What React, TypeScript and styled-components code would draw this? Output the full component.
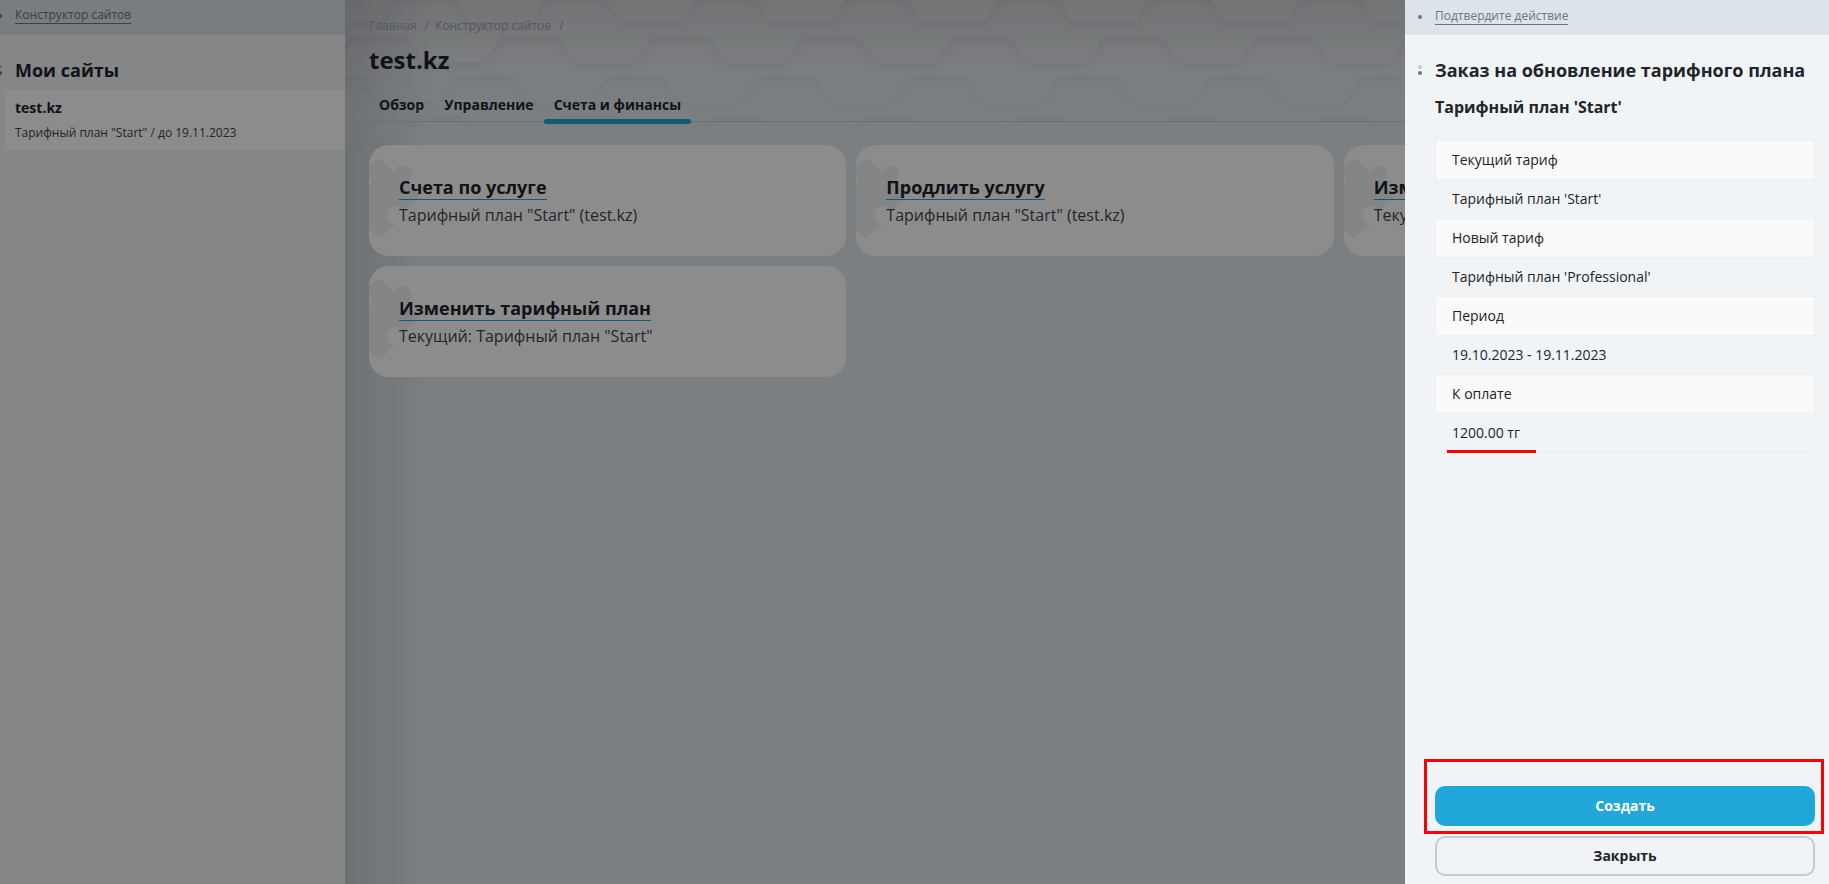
import React from "react";
import styled, { createGlobalStyle } from "styled-components";

const Global = createGlobalStyle`
  * { box-sizing: border-box; }
  html, body, #root { height: 100%; }
  body { margin: 0; overflow: hidden; font-family: "Open Sans", "Noto Sans", sans-serif; color: #20242b; }
  h1, h2, h3, p, ul, ol { margin: 0; padding: 0; }
  ul, ol { list-style: none; }
  a { color: inherit; text-decoration: none; }
`;

const Page = styled.div`
  display: grid;
  grid-template-columns: 345px minmax(0, 1fr);
  min-height: 100vh;
`;

const Sidebar = styled.aside`
  position: relative;
  background: #f0f4f7;
`;

const TopStrip = styled.div`
  display: flex;
  align-items: center;
  height: 35px;
  background: #dce3ea;
  font-size: 12px;
  line-height: 16px;
  color: #6c757d;
`;

const StripLink = styled.a`
  border-bottom: 1px solid #6c757d;
`;

const Dots = styled.span<{ $count: number }>`
  display: flex;
  flex: none;
  flex-direction: column;
  gap: 2px;
  width: 4px;
  &::before, &::after {
    content: "";
    width: 4px;
    height: 4px;
    border-radius: 50%;
    background: #6c757d;
  }
  &::before {
    display: ${(p) => (p.$count > 1 ? "block" : "none")};
    background: #c4c9ce;
  }
`;

const SideStrip = styled(TopStrip)`
  gap: 13px;
  margin-left: -2px;
  padding-bottom: 4px;
`;

const SideHeading = styled.div`
  display: flex;
  align-items: center;
  gap: 13px;
  margin: 22px 0 7px -2px;
`;

const Heading = styled.h2`
  font-size: 18px;
  line-height: 26px;
  font-weight: 700;
`;

const SiteItem = styled.a`
  display: block;
  margin-left: 5px;
  padding: 6px 10px;
  background: #fff;
`;

const SiteName = styled.strong`
  display: block;
  font-size: 14px;
  line-height: 24px;
  font-weight: 700;
`;

const SitePlan = styled.span`
  display: block;
  margin-top: 2px;
  font-size: 12px;
  line-height: 22px;
  color: #40464f;
`;

const Main = styled.main`
  position: relative;
  padding: 16px 8px 24px 24px;
  background: #e2e8ed;
`;

const Honeycomb = styled.svg`
  position: absolute;
  inset: 0 0 auto 0;
  width: 100%;
  height: 200px;
`;

const EdgeShade = styled.div`
  position: absolute;
  inset: 0 auto 0 0;
  width: 90px;
  background: linear-gradient(90deg, rgba(0, 8, 14, 0.11), rgba(0, 8, 14, 0));
`;

const Content = styled.div`
  position: relative;
`;

const Crumbs = styled.ol`
  display: flex;
  font-size: 12px;
  line-height: 20px;
  color: #9aa1a7;
  li::after { content: "/"; margin: 0 6px 0 8px; }
`;

const PageTitle = styled.h1`
  margin-top: 7px;
  font-size: 24px;
  line-height: 34px;
  font-weight: 700;
`;

const Tabs = styled.nav`
  display: flex;
  height: 45px;
  margin-bottom: 23px;
  border-bottom: 1px solid #bccdd6;
`;

const Tab = styled.a<{ $active?: boolean }>`
  position: relative;
  padding: 18px 10px 0;
  font-size: 14px;
  line-height: 20px;
  font-weight: 700;
  &::after {
    content: "";
    display: ${(p) => (p.$active ? "block" : "none")};
    position: absolute;
    inset: auto 0 -3px;
    height: 5px;
    border-radius: 3px;
    background: #22a7da;
  }
`;

const Cards = styled.div`
  display: grid;
  grid-template-columns: repeat(3, minmax(0, 1fr));
  gap: 10px;
`;

const Card = styled.article`
  position: relative;
  display: flex;
  flex-direction: column;
  align-items: flex-start;
  gap: 2px;
  min-height: 111px;
  padding: 30px 30px 28px;
  border-radius: 20px;
  background: #fff;
  overflow: hidden;
`;

const CardTitle = styled.a`
  position: relative;
  border-bottom: 1px solid #22a7da;
  font-size: 18px;
  line-height: 24px;
  font-weight: 700;
`;

const CardText = styled.p`
  position: relative;
  font-size: 16px;
  line-height: 26px;
  color: #40464f;
`;

const Puzzle = styled.svg`
  position: absolute;
  left: 0;
  top: 10px;
  width: 52px;
  height: 90px;
`;

const Backdrop = styled.div`
  position: fixed;
  inset: 0;
  background: rgba(0, 0, 0, 0.45);
`;

const Drawer = styled.section`
  position: fixed;
  inset: 0 0 0 auto;
  display: flex;
  flex-direction: column;
  width: 424px;
  background: #f0f4f7;
`;

const DrawerStrip = styled(TopStrip)`
  gap: 13px;
  flex: none;
  padding: 0 0 2px 13px;
`;

const DrawerHeading = styled.div`
  display: flex;
  align-items: center;
  gap: 13px;
  margin: 22px 0 0 13px;
`;

const DrawerBody = styled.div`
  flex: 1;
  padding: 12px 14px 0 30px;
`;

const PlanTitle = styled.h3`
  font-size: 16px;
  line-height: 24px;
  font-weight: 700;
`;

const Details = styled.table`
  width: 100%;
  margin-top: 21px;
  border-collapse: collapse;
  td {
    height: 39px;
    padding: 0 16px;
    border: 1px solid #eeeff1;
    font-size: 14px;
    line-height: 20px;
  }
  tr:nth-child(odd) td { background: #fafafa; }
`;

const Total = styled.span`
  position: relative;
  &::after {
    content: "";
    position: absolute;
    inset: auto -16px -11px -5px;
    height: 3px;
    background: #f00;
  }
`;

const Actions = styled.div`
  display: flex;
  flex-direction: column;
  gap: 10px;
  padding: 0 14px 8px 30px;
`;

const Highlight = styled.div`
  position: relative;
  display: flex;
  &::after {
    content: "";
    position: absolute;
    inset: -27px -9px -8px -11px;
    border: 3px solid #f00;
    pointer-events: none;
  }
`;

const Button = styled.button<{ $primary?: boolean }>`
  width: 100%;
  height: 40px;
  padding: 0;
  border: 2px solid ${(p) => (p.$primary ? "#22a7da" : "#bccdd6")};
  border-radius: 10px;
  background: ${(p) => (p.$primary ? "#22a7da" : "transparent")};
  color: ${(p) => (p.$primary ? "#fff" : "#20242b")};
  font: 700 14px/20px "Open Sans", "Noto Sans", sans-serif;
  cursor: pointer;
`;

const PERIOD = 151;

function wavePath(row: number) {
  const top = -4 + row * 40;
  const low = top + 26;
  let x = 48 - row * 46 - PERIOD * 2;
  let d = `M${x} -60 V${top}`;
  for (let i = 0; i < 18; i++) {
    d += ` H${x + 56} Q${x + 61} ${top} ${x + 64} ${top + 6} L${x + 72} ${low - 5} Q${x + 75} ${low} ${x + 80} ${low}`;
    d += ` H${x + 134} Q${x + 139} ${low} ${x + 142} ${low - 6} L${x + 150} ${top + 5} Q${x + 153} ${top} ${x + 158} ${top}`;
    x += PERIOD;
  }
  return `${d} V-60 Z`;
}

function HoneycombArt() {
  return (
    <Honeycomb aria-hidden="true">
      <defs>
        <linearGradient id="sky" gradientUnits="userSpaceOnUse" x1="0" y1="0" x2="0" y2="110">
          <stop offset="0" stopColor="#d0d3d7" />
          <stop offset="0.6" stopColor="#dfe3e7" />
          <stop offset="1" stopColor="#e2e8ed" />
        </linearGradient>
        <linearGradient id="fade" x1="0" y1="0" x2="0" y2="1">
          <stop offset="0" stopColor="#fff" />
          <stop offset="0.4" stopColor="#fff" stopOpacity="0.7" />
          <stop offset="0.9" stopColor="#fff" stopOpacity="0" />
        </linearGradient>
        <mask id="veil"><rect width="100%" height="200" fill="url(#fade)" /></mask>
        <filter id="soft" x="-5%" y="-20%" width="110%" height="150%" colorInterpolationFilters="sRGB">
          <feDropShadow dx="0" dy="5" stdDeviation="4" floodColor="#3c4a55" floodOpacity="0.08" />
        </filter>
      </defs>
      <rect width="100%" height="200" fill="url(#sky)" />
      <g mask="url(#veil)">
        {[3, 2, 1, 0].map((row) => (
          <path key={row} d={wavePath(row)} fill="url(#sky)" filter="url(#soft)" />
        ))}
      </g>
    </Honeycomb>
  );
}

const cards = [
  { title: "Счета по услуге", text: 'Тарифный план "Start" (test.kz)' },
  { title: "Продлить услугу", text: 'Тарифный план "Start" (test.kz)' },
  { title: "Изменить", text: "Текущий" },
  { title: "Изменить тарифный план", text: 'Текущий: Тарифный план "Start"' },
];

const details = [
  "Текущий тариф",
  "Тарифный план 'Start'",
  "Новый тариф",
  "Тарифный план 'Professional'",
  "Период",
  "19.10.2023 - 19.11.2023",
  "К оплате",
];

export default function App() {
  return (
    <>
      <Global />
      <Page>
        <Sidebar>
          <SideStrip>
            <Dots $count={1} />
            <StripLink href="#sites">Конструктор сайтов</StripLink>
          </SideStrip>
          <SideHeading>
            <Dots $count={2} />
            <Heading>Мои сайты</Heading>
          </SideHeading>
          <SiteItem href="#test">
            <SiteName>test.kz</SiteName>
            <SitePlan>Тарифный план "Start" / до 19.11.2023</SitePlan>
          </SiteItem>
        </Sidebar>
        <Main>
          <HoneycombArt />
          <EdgeShade />
          <Content>
            <Crumbs>
              <li><a href="#home">Главная</a></li>
              <li><a href="#sites">Конструктор сайтов</a></li>
            </Crumbs>
            <PageTitle>test.kz</PageTitle>
            <Tabs>
              <Tab href="#overview">Обзор</Tab>
              <Tab href="#manage">Управление</Tab>
              <Tab href="#billing" $active>Счета и финансы</Tab>
            </Tabs>
            <Cards>
              {cards.map((c) => (
                <Card key={c.title}>
                  <Puzzle viewBox="0 0 52 90" aria-hidden="true">
                    <path
                      d="M0 10 L8 4 Q10 3 12 4 L25 17 Q28 10 34 10 A9 9 0 0 1 43 19 Q43 24 38 27 L49 39 Q50 41 49 43 L34 56 Q32 51 27 51 A9 9 0 0 0 18 60 Q18 67 26 69 L12 82 Q10 84 8 82 L0 75 V30 Q2 29 2 26 Q2 23 0 22 Z"
                      fill="#f0f2f5"
                    />
                  </Puzzle>
                  <CardTitle href="#card">{c.title}</CardTitle>
                  <CardText>{c.text}</CardText>
                </Card>
              ))}
            </Cards>
          </Content>
        </Main>
      </Page>
      <Backdrop />
      <Drawer role="dialog" aria-labelledby="order-title">
        <DrawerStrip>
          <Dots $count={1} />
          <StripLink href="#confirm">Подтвердите действие</StripLink>
        </DrawerStrip>
        <DrawerHeading>
          <Dots $count={2} />
          <Heading id="order-title">Заказ на обновление тарифного плана</Heading>
        </DrawerHeading>
        <DrawerBody>
          <PlanTitle>Тарифный план 'Start'</PlanTitle>
          <Details>
            <tbody>
              {details.map((d) => (
                <tr key={d}><td>{d}</td></tr>
              ))}
              <tr><td><Total>1200.00 тг</Total></td></tr>
            </tbody>
          </Details>
        </DrawerBody>
        <Actions>
          <Highlight>
            <Button type="button" $primary>Создать</Button>
          </Highlight>
          <Button type="button">Закрыть</Button>
        </Actions>
      </Drawer>
    </>
  );
}
